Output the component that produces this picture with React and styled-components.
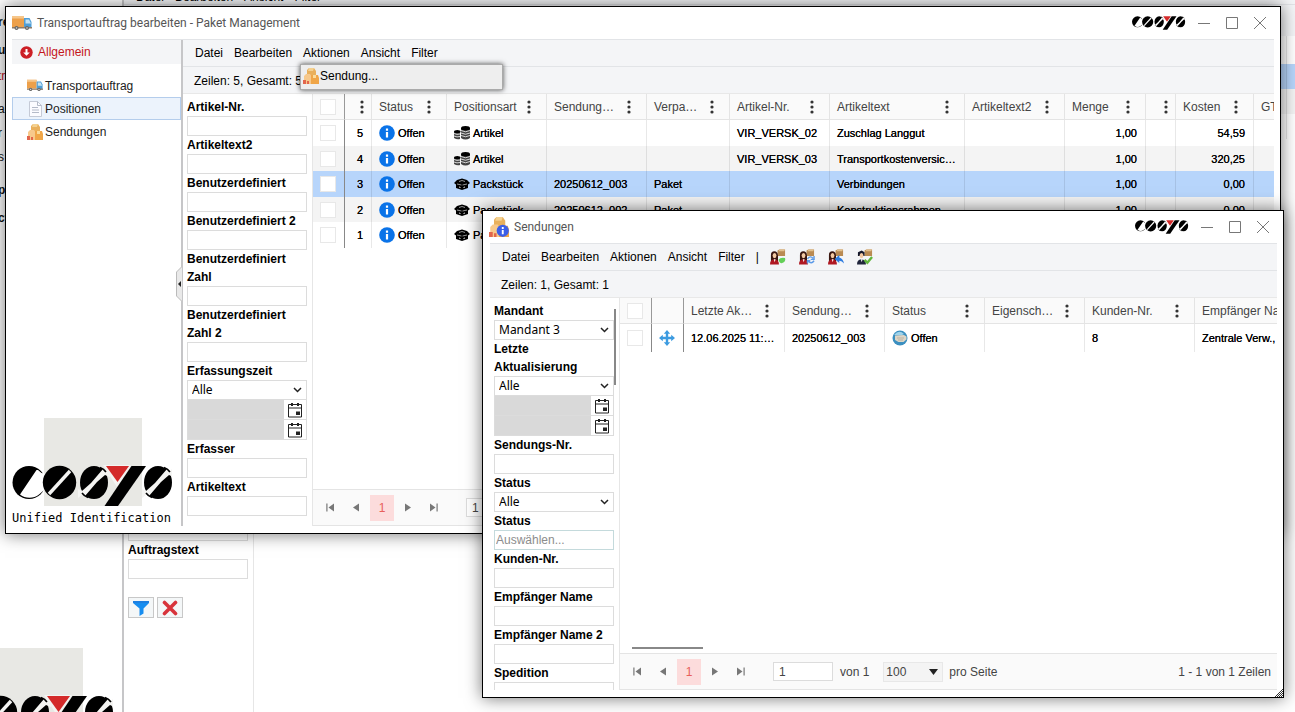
import React, { useId } from 'react';
import styled, { createGlobalStyle } from 'styled-components';

const GlobalStyle = createGlobalStyle`
  * {
    box-sizing: border-box;
  }
  body {
    margin: 0;
    background: #fff;
    color: #000;
    font: 12px/14px "Liberation Sans", Arial, sans-serif;
  }
  button, input, select {
    margin: 0;
    border-radius: 0;
    color: inherit;
    font: inherit;
  }
  svg {
    display: block;
  }
`;

// Desktop and windows
const Desktop = styled.div`
  position: relative;
  height: 100vh;
  overflow: hidden;
`;

const Window = styled.section`
  position: absolute;
  display: flex;
  flex-direction: column;
  background: #fff;
  border: 1px solid #000;
  box-shadow: 0 0 16px rgba(0, 0, 0, 0.55);
`;

const OrderWindow = styled(Window)`
  top: 6px;
  left: 5px;
  right: 14px;
  height: 528px;
`;

const ShipmentWindow = styled(Window)`
  top: 210px;
  left: 482px;
  right: 11px;
  bottom: 14px;
`;

const TitleBar = styled.header`
  display: flex;
  align-items: center;
  height: 32px;
  padding: 0 6px;
`;

const Title = styled.h1`
  flex: 1;
  margin: 0 0 0 5px;
  color: #555;
  font: 12px/16px Roboto, "Open Sans", sans-serif;
`;

const TitleButtons = styled.div`
  display: flex;
  margin-left: 4px;
`;

const TitleButton = styled.button`
  display: grid;
  place-items: center;
  width: 28px;
  height: 28px;
  padding: 0;
  border: 0;
  background: none;
`;

const WindowBody = styled.div`
  display: flex;
  flex: 1;
  min-height: 0;
  margin: 0 6px 7px;
  border-top: 1px solid #e2e4e7;
`;

const ShipmentBody = styled(WindowBody)`
  margin-left: 7px;
`;

const Main = styled.div`
  display: flex;
  flex: 1;
  flex-direction: column;
  min-width: 0;
`;

const ResizeGrip = styled.svg`
  position: absolute;
  right: 0;
  bottom: 0;
`;

// Menus
const MenuBar = styled.nav`
  display: flex;
  align-items: center;
  gap: 11px;
  height: 27px;
  padding-left: 12px;
  background: #f4f5f7;
  border-bottom: 1px solid #e2e4e7;
`;

const MenuButton = styled.button`
  padding: 0;
  border: 0;
  background: none;
`;

const ToolGroup = styled.div`
  display: flex;
  gap: 13px;
`;

const ToolButton = styled(MenuButton)`
  display: block;
  height: 16px;
`;

const MenuPopup = styled.div`
  position: absolute;
  top: 57px;
  left: 294px;
  width: 203px;
  height: 26px;
  background: #eee;
  border: 1px solid #aaa;
  box-shadow: 0 0 5px rgba(0, 0, 0, 0.7);
`;

const PopupItem = styled.button`
  display: flex;
  align-items: center;
  gap: 1px;
  width: 100%;
  height: 22px;
  padding: 0 2px;
  border: 0;
  background: none;
`;

const RowSummary = styled.div`
  height: 27px;
  padding: 7px 11px 0;
  background: #f4f5f7;
  border-bottom: 1px solid #e8e8e8;
`;

// Sidebar
const Sidebar = styled.aside`
  position: relative;
  display: flex;
  flex: none;
  flex-direction: column;
  width: 171px;
  border-right: 2px solid #c6c6c8;
`;

const SidebarHead = styled.div`
  display: flex;
  align-items: center;
  gap: 5px;
  height: 24px;
  margin-bottom: 10px;
  padding-left: 8px;
  background: #f4f5f7;
  color: #c4161c;
`;

const SidebarItem = styled.a`
  display: flex;
  align-items: center;
  gap: 2px;
  height: 23px;
  padding-left: 14px;
  border: 1px solid ${(props) => (props.$active ? '#b4cdec' : 'transparent')};
  background: ${(props) => (props.$active ? '#ecf3fc' : 'none')};
  color: #222;
  text-decoration: none;
`;

const CollapseButton = styled.button`
  position: absolute;
  top: 226px;
  right: -1px;
  height: 36px;
  padding: 0;
  border: 0;
  background: none;
`;

const Brand = styled.div`
  margin-top: auto;
  white-space: nowrap;
`;

const BrandText = styled.div`
  margin-top: 4px;
  font: 12px/16px "DejaVu Sans Mono", monospace;
`;

// Filter form
const Content = styled.div`
  display: flex;
  flex: 1;
  min-height: 0;
`;

const Filters = styled.form`
  position: relative;
  flex: none;
  width: 130px;
  padding: 4px 5px 0 4px;
  overflow: hidden;
  border-right: 1px solid #e6e6e6;
`;

const ScrollThumb = styled.div`
  position: absolute;
  top: 11px;
  right: 3px;
  width: 2px;
  height: 76px;
  background: #888;
`;

const FieldLabel = styled.label`
  display: block;
  font-weight: bold;
  line-height: 18px;
`;

const TextInput = styled.input`
  display: block;
  width: 120px;
  height: 20px;
  padding: 0 1px;
  border: 1px solid ${(props) => (props.$tinted ? '#c4dadc' : '#dcdcdc')};
  background: #fff;
  outline: 0;

  &::placeholder {
    color: #8c8c8c;
  }
`;

const SelectBox = styled.div`
  display: grid;
  align-items: center;
  width: 120px;

  > * {
    grid-area: 1 / 1;
  }
  > svg {
    justify-self: end;
    margin-right: 5px;
    pointer-events: none;
  }
`;

const Select = styled.select`
  width: 100%;
  height: 20px;
  padding: 0 4px;
  border: 1px solid #dcdcdc;
  background: #fff;
  appearance: none;
  font: 12px/18px "Noto Sans", sans-serif;
`;

const DateRow = styled.div`
  display: flex;
  width: 120px;
  height: 20px;
  border: 1px solid #dcdcdc;
  border-top: 0;
`;

const DateInput = styled.input`
  width: 96px;
  padding: 0 2px;
  border: 0;
  background: #d9d9d9;
`;

const DateButton = styled.button`
  display: grid;
  flex: 1;
  place-items: center;
  padding: 0;
  border: 0;
  background: #fff;
`;

// Data grid
const GridArea = styled.div`
  display: flex;
  flex: 1;
  flex-direction: column;
  min-width: 0;
`;

const GridScroll = styled.div`
  flex: 1;
  overflow: hidden;
`;

const Table = styled.table`
  width: ${(props) => props.$width}px;
  table-layout: fixed;
  border-spacing: 0;
`;

const HeadCell = styled.th`
  height: 26px;
  padding: 0 ${(props) => (props.$narrow ? 7 : 15)}px 0 7px;
  background: #fafafa;
  border-right: 1px solid ${(props) => (props.$strong ? '#999' : '#e4e4e4')};
  border-bottom: 1px solid #e4e4e4;
  color: #444;
  font-weight: normal;
  text-align: left;
`;

const HeadContent = styled.div`
  display: flex;
  align-items: center;
  justify-content: space-between;
  white-space: nowrap;
`;

const Row = styled.tr`
  height: ${(props) => props.$height}px;
  background: ${(props) => (props.$selected ? '#b7d5fb' : props.$alt ? '#f4f4f4' : '#fff')};
`;

const Cell = styled.td`
  padding: 0 8px 0 7px;
  overflow: hidden;
  border-right: 1px solid ${(props) => (props.$strong ? '#888' : 'rgba(0, 0, 0, 0.09)')};
  font-size: 11px;
  text-align: ${(props) => (props.$right ? 'right' : 'left')};
  text-overflow: ellipsis;
  text-shadow: 0 0 0 #000;
  white-space: nowrap;
`;

const IconText = styled.span`
  display: flex;
  align-items: center;
  gap: 3px;
`;

const Check = styled.input`
  display: block;
  width: 16px;
  height: 16px;
  appearance: none;
  border: 1px solid #e8e8e8;
  background: #fff;
`;

const HorizontalThumb = styled.div`
  width: 71px;
  height: 2px;
  margin: 0 0 4px 12px;
  background: #888;
`;

// Pager
const PagerBar = styled.div`
  display: flex;
  align-items: center;
  gap: 2px;
  height: 37px;
  padding: 0 6px 0 5px;
  overflow: hidden;
  background: #fafafa;
  border-top: 1px solid #e4e4e4;
  border-bottom: 1px solid #e4e4e4;
  color: #444;
  white-space: nowrap;
`;

const PageButton = styled.button`
  display: grid;
  flex: none;
  place-items: center;
  width: 24px;
  height: 26px;
  padding: 0;
  border: 0;
  background: ${(props) => (props.$current ? '#fcdcdc' : 'none')};
  color: ${(props) => (props.$current ? '#e8605c' : '#777')};
`;

const PageInput = styled.input`
  flex: none;
  width: 60px;
  height: 19px;
  margin: 0 5px 0 18px;
  padding: 0 5px;
  border: 1px solid #dcdcdc;
  background: #fff;
`;

const PageSize = styled(SelectBox)`
  width: 60px;
  margin: 0 4px 0 12px;
`;

const PageSizeSelect = styled(Select)`
  padding: 0 2px;
  background: #f4f4f4;
  border-color: #e8e8e8;
  font: inherit;
`;

const PagerTotal = styled.span`
  margin-left: auto;
`;

// Window at the back, mostly covered
const BackWindow = styled.div`
  display: flex;
  height: 100%;
`;

const BackSidebar = styled.aside`
  display: flex;
  flex: none;
  flex-direction: column;
  width: 124px;
  border-right: 2px solid #c6c6c8;
`;

const BackItem = styled.div`
  height: 24px;
  margin-top: ${(props) => props.$gap}px;
  color: ${(props) => (props.$red ? '#c4161c' : '#111')};
  font-weight: ${(props) => (props.$bold ? 'bold' : 'normal')};
  line-height: 24px;
  text-indent: -2px;
`;

const BackBrand = styled(Brand)`
  margin: auto 0 -44px -47px;
`;

const BackMain = styled(Main)`
  border-top: 9px solid #f4f5f7;
`;

const BackMenu = styled.div`
  display: flex;
  gap: 11px;
  margin-top: -19px;
  padding-left: 12px;
`;

const BackSummary = styled.div`
  height: 32px;
  background: #f4f5f7;
  border-top: 1px solid #e2e4e7;
`;

const BackFilters = styled(Filters)`
  padding-top: 485px;
`;

const ButtonRow = styled.div`
  display: flex;
  gap: 3px;
  margin-top: 18px;
`;

const FilterButton = styled.button`
  display: grid;
  place-items: center;
  width: 26px;
  height: 21px;
  padding: 0;
  border: 1px solid #c8c8c8;
  background: #f4f7f8;
`;

const BackRow = styled.div`
  height: ${(props) => props.$height}px;
  padding-right: 8px;
  background: ${(props) => props.$color};
`;

const BackCell = styled.div`
  height: 100%;
  border-right: 1px solid rgba(0, 0, 0, 0.1);
`;

// Icons
const CosysMark = ({ width, square }) => {
  const gap = square ? '#f4f4f2' : '#fff';
  return (
    <svg width={width} height={square ? 88 : 14} viewBox={square ? '0 0 160 88' : '0 47 160 42'}>
      {square && <rect x="32" width="98" height="88" fill="#e8e8e4" />}
      <circle cx="17" cy="64.5" r="16.5" />
      <path d="M24.500 52 L8 76.500 A15.2 15.2 0 0 0 27 76.500 L31 73 L36 70 V56 L29.500 55 L26 52 Z" fill="#fff" />
      <circle cx="47.5" cy="64.5" r="16.7" />
      <path d="M58 53 L37 76" stroke={gap} strokeWidth="3.4" />
      {[82, 146].map((x) => (
        <g key={x}>
          <ellipse cx={x} cy="64.5" rx="14" ry="16.5" />
          <path
            d={`M${x + 9} 51 L${x - 3} 65 L${x - 12} 73 L${x - 16} 71 L${x - 16} 80 L${x - 11} 76 L${x - 9} 78 L${x + 3} 64 L${x + 11} 57 L${x + 16} 59 L${x + 16} 49 L${x + 11} 54 Z`}
            fill={gap}
          />
          <path
            d={`M${x + 6} 49.500 Q${x + 10} 51 ${x + 12} 54 M${x - 6} 79.500 Q${x - 10} 78 ${x - 12} 75`}
            fill="none"
            stroke="#000"
            strokeWidth="1.500"
          />
        </g>
      ))}
      <path d="M91 47 H119 L105 69 Z" fill={gap} />
      <path d="M94 48 H117 L105.5 64 Z" fill="#d42a2a" />
      <path d="M119.5 48 H134 L106 88 H92.500 Z" />
    </svg>
  );
};

const TruckIcon = ({ width = 20 }) => (
  <svg width={width} height={width * 0.8} viewBox="0 0 20 16">
    <path d="M0 1 h12 v11 h-12 Z" fill="#eda04a" />
    <path d="M0 1 h12 v2.500 h-12 Z" fill="#f6c68a" />
    <path d="M12 3 h5.500 l2 4 v6 h-7.500 Z" fill="#4f9ed6" />
    <path d="M13.500 4.500 h3.500 l2 4 h-5.500 Z" fill="#c3e2f4" />
    <path d="M0 12 h20 v1.500 h-20 Z" fill="#8f7b67" />
    <circle cx="4.500" cy="13" r="2" fill="#666" />
    <circle cx="15" cy="13" r="2" fill="#666" />
    <circle cx="4.500" cy="13" r=".8" fill="#ddd" />
    <circle cx="15" cy="13" r=".8" fill="#ddd" />
  </svg>
);

const ParcelsIcon = ({ size = 16, info }) => (
  <svg width={size} height={size} viewBox="0 0 16 16">
    <path d="M4 2 l2 -2 h5 l2 3 v5 h-9 Z" fill="#e9b05c" />
    <path d="M6 0 h5 l-1 3 h-5 Z" fill="#f4d190" />
    <path d="M1 8 l2 -2 h4 l2 3 v7 h-8 Z" fill="#f7c98c" />
    <path d="M8 7 h7 l1 3 v6 h-8 Z" fill="#f0a648" />
    <path d="M10 7 h3 v3 h-3 Z" fill="#fbdc9b" />
    <path d="M0 12 h3 v4 h-3 Z M4 13 h2 v3 h-2 Z" fill="#e2664c" />
    {info && (
      <>
        <circle cx="11" cy="11" r="4.900" fill="#3c5fe8" />
        <path d="M11 8 v1.500 M11 10.300 v3.500" stroke="#fff" strokeWidth="1.500" />
      </>
    )}
  </svg>
);

const DocumentIcon = () => (
  <svg width="16" height="16" viewBox="0 0 16 16">
    <path d="M2.500 .5 h8 l4 4 v11 h-12 Z" fill="#fbfbff" stroke="#c5cad6" />
    <path d="M10.500 .5 v4 h4 M5 6.500 h6 M5 9 h7 M5 11.500 h7" fill="none" stroke="#b4bac8" />
  </svg>
);

const ExpandIcon = () => (
  <svg width="13" height="13" viewBox="0 0 13 13">
    <circle cx="6.500" cy="6.500" r="6.200" fill="#cc1f25" />
    <path d="M5.500 3 h2 v3.500 h2.300 l-3.300 3.300 l-3.300 -3.300 h2.300 Z" fill="#fff" />
  </svg>
);

const InfoIcon = () => (
  <svg width="16" height="16" viewBox="0 0 16 16">
    <circle cx="8" cy="8" r="7.800" fill="#0a73e8" />
    <path d="M8 3.500 v2.200 M8 7 v5.500" stroke="#fff" strokeWidth="2.200" />
  </svg>
);

const CoinsIcon = () => (
  <svg width="16" height="14" viewBox="0 0 16 14">
    <path d="M7 2 V12 q4.500 3 9 0 V2 Z M0 6 V12 q3 2 6 1 V6 Z" fill="#444" />
    <ellipse cx="11.500" cy="2.200" rx="4.500" ry="2.200" />
    <ellipse cx="3.300" cy="5.500" rx="3.300" ry="1.600" />
    <path
      d="M7 4.500 q4.500 2.500 9 0 M7 7 q4.500 2.500 9 0 M7 9.500 q4.500 2.500 9 0 M0 7.500 q3 1.500 6 .5 M0 10 q3 1.500 6 .5"
      fill="none"
      stroke="#e6e6e6"
      strokeWidth=".9"
    />
  </svg>
);

const BoxIcon = () => (
  <svg width="16" height="12" viewBox="0 0 16 12">
    <path d="M3 2 l5 -1.500 l5 1.500 l3 3 l-2 1.500 v3.500 l-6 2 l-6 -2 v-3.500 l-2 -1.500 Z" />
    <path d="M5 3.500 l3 -1 l3 1 M3 6 l4.500 1 M13 6 l-4.500 1" fill="none" stroke="#bbb" strokeWidth=".8" />
    <path d="M5 9 l1.500 .5 M9.500 9.500 l1.500 -.5" stroke="#ddd" />
  </svg>
);

const PersonIcon = ({ kind }) => (
  <svg width="16" height="16" viewBox="0 0 17 16">
    <path d="M8 1 l2 -1 h6 v7 h-8 Z" fill="#b98a52" />
    <path d="M10 0 h6 l-1 2 h-6 Z" fill="#e2c08c" />
    <path
      d={kind === 'man' ? 'M1 3 l4 -2 l3 2 v4 h-7 Z' : 'M1 14 V6 q0 -4 3.500 -4 q4 0 4 5 v7 Z'}
      fill={kind === 'man' ? '#15182b' : '#3a1710'}
    />
    <ellipse cx="4.800" cy="6.500" rx="2" ry="2.800" fill="#f3c9a3" />
    <path d="M0 16 q0 -5 4.500 -5.500 q5 .5 5 5.500 Z" fill={kind === 'man' ? '#20253c' : '#b01822'} />
    <path d="M4 10.500 l1 3 l1 -3 Z" fill="#fff" />
    {kind === 'add' && <path d="M9 11 q2 -3 7 -2 q1 4 -3 5.500 q-3 .5 -4 -3.500 Z" fill="#63cf58" />}
    {kind === 'sync' && (
      <path d="M9 10 q3 -4 6 -.5 M16 7 v3.500 h-3.500 M16 12 q-3 4 -6 .5 M9 15 v-3 h3" fill="none" stroke="#5b9ae8" strokeWidth="1.500" />
    )}
    {kind === 'back' && <path d="M7 10 l5 -4 v2.500 q4 1 5 6.500 q-2 -3 -5 -3 v2.500 Z" fill="#2d7be0" />}
    {kind === 'man' && <path d="M8 11 l3 3 l5 -6" fill="none" stroke="#61b53b" strokeWidth="2.500" />}
  </svg>
);

const MoveIcon = () => (
  <svg width="16" height="16" viewBox="0 0 16 16">
    <path
      d="M8 0 l3.200 3.800 h-2 v3 h3 v-2 l3.800 3.200 l-3.800 3.200 v-2 h-3 v3 h2 l-3.200 3.800 l-3.200 -3.800 h2 v-3 h-3 v2 l-3.800 -3.200 l3.800 -3.200 v2 h3 v-3 h-2 Z"
      fill="#3c9be0"
    />
  </svg>
);

const GlobeIcon = () => (
  <svg width="16" height="16" viewBox="0 0 16 16">
    <circle cx="8" cy="8" r="7.500" fill="#3b8fc0" />
    <path d="M2 5 q5 -6 10 -1 l-2 1 Z" fill="#9fd3ea" />
    <path d="M3 5.500 l9 -.5 l2.500 1.500 v3 l-3 2.500 h-5 l-3.500 -2 Z" fill="#dcd5c6" />
    <path d="M5 8 h7 M6 10 h5" fill="none" stroke="#b3aa99" strokeWidth=".8" />
  </svg>
);

const DotsIcon = () => (
  <svg width="4" height="14" viewBox="0 0 4 14" fill="#333">
    <circle cx="2" cy="2" r="1.600" />
    <circle cx="2" cy="7" r="1.600" />
    <circle cx="2" cy="12" r="1.600" />
  </svg>
);

const ChevronIcon = () => (
  <svg width="9" height="6" viewBox="0 0 9 6">
    <path d="M1 1 l3.500 3.500 L8 1" fill="none" stroke="#222" strokeWidth="1.500" />
  </svg>
);

const CalendarIcon = () => (
  <svg width="14" height="16" viewBox="0 0 14 16">
    <path d="M.5 2.500 h13 v12.500 h-13 Z M.5 6 h13" fill="none" stroke="#222" />
    <path d="M3 1 h2 v3 h-2 Z M9 1 h2 v3 h-2 Z M8 9.500 h4 v3.500 h-4 Z" fill="#222" />
  </svg>
);

const ArrowIcon = ({ flip, end }) => (
  <svg width="8" height="9" viewBox="0 0 8 9" fill="currentColor">
    <g transform={flip ? 'translate(8 0) scale(-1 1)' : undefined}>
      <path d={end ? 'M0 .5 L5.500 4.500 L0 8.500 Z M6.500 .5 h1.200 v8 h-1.200 Z' : 'M1 .5 L7 4.500 L1 8.500 Z'} />
    </g>
  </svg>
);

const menuItems = ['Datei', 'Bearbeiten', 'Aktionen', 'Ansicht', 'Filter'];

const WindowTitle = ({ icon, children }) => (
  <TitleBar>
    {icon}
    <Title>{children}</Title>
    <CosysMark width={55} />
    <TitleButtons>
      <TitleButton aria-label="Minimieren">
        <svg width="12" height="12" viewBox="0 0 12 12">
          <path d="M0 6.500 h12" stroke="#777" />
        </svg>
      </TitleButton>
      <TitleButton aria-label="Maximieren">
        <svg width="12" height="12" viewBox="0 0 12 12">
          <path d="M.5 .5 h11 v11 h-11 Z" fill="none" stroke="#777" />
        </svg>
      </TitleButton>
      <TitleButton aria-label="Schließen">
        <svg width="12" height="12" viewBox="0 0 12 12">
          <path d="M0 0 L12 12 M12 0 L0 12" stroke="#777" />
        </svg>
      </TitleButton>
    </TitleButtons>
  </TitleBar>
);

const Field = ({ label, type, value = 'Alle', placeholder }) => {
  const id = useId();
  const isSelect = type === 'select' || type === 'period';

  return (
    <div>
      <FieldLabel htmlFor={id}>{label}</FieldLabel>
      {isSelect ? (
        <SelectBox>
          <Select id={id}>
            <option>{value}</option>
          </Select>
          <ChevronIcon />
        </SelectBox>
      ) : (
        <TextInput id={id} placeholder={placeholder} $tinted={Boolean(placeholder)} />
      )}
      {type === 'period' &&
        ['von', 'bis'].map((edge) => (
          <DateRow key={edge}>
            <DateInput disabled aria-label={`${label} ${edge}`} />
            <DateButton type="button" aria-label={`${label} ${edge} wählen`}>
              <CalendarIcon />
            </DateButton>
          </DateRow>
        ))}
    </div>
  );
};

const Pager = ({ total }) => (
  <PagerBar>
    <PageButton aria-label="Erste Seite">
      <ArrowIcon flip end />
    </PageButton>
    <PageButton aria-label="Vorherige Seite">
      <ArrowIcon flip />
    </PageButton>
    <PageButton $current>1</PageButton>
    <PageButton aria-label="Nächste Seite">
      <ArrowIcon />
    </PageButton>
    <PageButton aria-label="Letzte Seite">
      <ArrowIcon end />
    </PageButton>
    <PageInput aria-label="Seite" defaultValue="1" />
    <span>von 1</span>
    <PageSize>
      <PageSizeSelect aria-label="Zeilen pro Seite">
        <option>100</option>
      </PageSizeSelect>
      <svg width="9" height="6" viewBox="0 0 9 6">
        <path d="M0 0 h9 L4.500 6 Z" fill="#222" />
      </svg>
    </PageSize>
    <span>pro Seite</span>
    <PagerTotal>{total}</PagerTotal>
  </PagerBar>
);

const Grid = ({ columns, rows, rowHeight }) => (
  <Table $width={columns.reduce((sum, column) => sum + column.width, 0)}>
    <colgroup>
      {columns.map((column, index) => (
        <col key={index} style={{ width: column.width }} />
      ))}
    </colgroup>
    <thead>
      <tr>
        {columns.map((column, index) => (
          <HeadCell key={index} $narrow={column.narrow} $strong={column.strong}>
            {column.check ? (
              <Check type="checkbox" aria-label="Alle auswählen" />
            ) : (
              <HeadContent>
                <span>{column.title}</span>
                {!column.plain && <DotsIcon />}
              </HeadContent>
            )}
          </HeadCell>
        ))}
      </tr>
    </thead>
    <tbody>
      {rows.map((row, index) => (
        <Row key={index} $height={rowHeight - (index % 2)} $alt={index % 2 === 1} $selected={row.selected}>
          {columns.map((column, cell) => (
            <Cell key={cell} $right={column.right} $strong={column.strong}>
              {column.check ? <Check type="checkbox" aria-label="Zeile auswählen" /> : row.cells[cell - 1]}
            </Cell>
          ))}
        </Row>
      ))}
    </tbody>
  </Table>
);

const withIcon = (icon, text) => (
  <IconText>
    {icon}
    {text}
  </IconText>
);

const positionColumns = [
  { width: 32, check: true, strong: true },
  { width: 27, narrow: true, right: true },
  { width: 75, title: 'Status' },
  { width: 100, title: 'Positionsart' },
  { width: 100, title: 'Sendung…' },
  { width: 83, title: 'Verpa…' },
  { width: 100, title: 'Artikel-Nr.' },
  { width: 135, title: 'Artikeltext' },
  { width: 100, title: 'Artikeltext2' },
  { width: 81, title: 'Menge', right: true },
  { width: 30, narrow: true },
  { width: 78, title: 'Kosten', right: true },
  { width: 100, title: 'GT', plain: true },
];

const open = withIcon(<InfoIcon />, 'Offen');
const article = withIcon(<CoinsIcon />, 'Artikel');
const parcel = withIcon(<BoxIcon />, 'Packstück');

const positions = [
  { cells: ['5', open, article, '', '', 'VIR_VERSK_02', 'Zuschlag Langgut', '', '1,00', '', '54,59'] },
  { cells: ['4', open, article, '', '', 'VIR_VERSK_03', 'Transportkostenversicherung', '', '1,00', '', '320,25'] },
  { cells: ['3', open, parcel, '20250612_003', 'Paket', '', 'Verbindungen', '', '1,00', '', '0,00'], selected: true },
  { cells: ['2', open, parcel, '20250612_002', 'Paket', '', 'Konstruktionsrahmen', '', '1,00', '', '0,00'] },
  { cells: ['1', open, parcel] },
];

const shipmentColumns = [
  { width: 32, check: true, strong: true },
  { width: 32, plain: true, strong: true },
  { width: 101, title: 'Letzte Ak…' },
  { width: 100, title: 'Sendung…' },
  { width: 100, title: 'Status' },
  { width: 100, title: 'Eigensch…' },
  { width: 110, title: 'Kunden-Nr.' },
  { width: 150, title: 'Empfänger Name' },
];

const shipments = [
  { cells: [<MoveIcon />, '12.06.2025 11:30:00', '20250612_003', withIcon(<GlobeIcon />, 'Offen'), '', '8', 'Zentrale Verw., Lager'] },
];

const backItems = [
  { text: 're', gap: 10, bold: true },
  { text: 'u', gap: 4, bold: true },
  { text: 'tr', gap: 2, red: true },
  { text: 'ar', gap: 9 },
  { text: 'r', gap: 0 },
  { text: 's', gap: 0 },
  { text: 'pe', gap: 9, bold: true },
  { text: 'ct', gap: 4, bold: true },
];

const Background = () => (
  <BackWindow>
    <BackSidebar>
      {backItems.map((item) => (
        <BackItem key={item.text} $gap={item.gap} $bold={item.bold} $red={item.red}>
          {item.text}
        </BackItem>
      ))}
      <BackBrand>
        <CosysMark width={160} square />
        <BrandText>Unified Identification</BrandText>
      </BackBrand>
    </BackSidebar>
    <BackMain>
      <BackMenu>
        {['Datei', 'Bearbeiten', 'Ansicht', 'Filter'].map((item) => (
          <span key={item}>{item}</span>
        ))}
      </BackMenu>
      <BackSummary />
      <Content>
        <BackFilters>
          <TextInput aria-label="Filter" />
          <Field label="Auftragstext" />
          <ButtonRow>
            <FilterButton type="button" aria-label="Filtern">
              <svg width="16" height="16" viewBox="0 0 16 16">
                <path d="M0 1 h16 v2 l-5.500 5.500 v5 l-4 2.500 v-7.500 l-6.500 -5.500 Z" fill="#168df0" />
                <path d="M0 1 h16 v2 h-16 Z" fill="#1d7fe0" />
              </svg>
            </FilterButton>
            <FilterButton type="button" aria-label="Filter löschen">
              <svg width="16" height="16" viewBox="0 0 16 16">
                <path d="M2.500 2.500 L13.500 13.500 M13.500 2.500 L2.500 13.500" stroke="#d8343c" strokeWidth="3.600" strokeLinecap="round" />
              </svg>
            </FilterButton>
          </ButtonRow>
        </BackFilters>
        <GridArea>
          <BackRow $height={28} $color="#fff">
            <BackCell />
          </BackRow>
          <BackRow $height={25} $color="#b7d5fb">
            <BackCell />
          </BackRow>
          <BackRow $height={25} $color="#f4f4f4">
            <BackCell />
          </BackRow>
          <BackRow $height={25} $color="#fff">
            <BackCell />
          </BackRow>
        </GridArea>
      </Content>
    </BackMain>
  </BackWindow>
);

const Positions = () => (
  <OrderWindow>
    <WindowTitle icon={<TruckIcon />}>Transportauftrag bearbeiten - Paket Management</WindowTitle>
    <WindowBody>
      <Sidebar>
        <SidebarHead>
          <ExpandIcon />
          Allgemein
        </SidebarHead>
        <SidebarItem href="#transportauftrag">
          <TruckIcon width={16} />
          Transportauftrag
        </SidebarItem>
        <SidebarItem href="#positionen" $active>
          <DocumentIcon />
          Positionen
        </SidebarItem>
        <SidebarItem href="#sendungen">
          <ParcelsIcon />
          Sendungen
        </SidebarItem>
        <Brand>
          <CosysMark width={160} square />
          <BrandText>Unified Identification</BrandText>
        </Brand>
        <CollapseButton aria-label="Seitenleiste einklappen">
          <svg width="6" height="36" viewBox="0 0 6 36">
            <path d="M6 .5 L.5 6 V30 L6 35.500" fill="#e9e9e9" stroke="#bbb" />
            <path d="M5 15 v6 l-3 -3 Z" fill="#222" />
          </svg>
        </CollapseButton>
      </Sidebar>
      <Main>
        <MenuBar>
          {menuItems.map((item) => (
            <MenuButton key={item}>{item}</MenuButton>
          ))}
        </MenuBar>
        <RowSummary>Zeilen: 5, Gesamt: 5</RowSummary>
        <Content>
          <Filters>
            <Field label="Artikel-Nr." />
            <Field label="Artikeltext2" />
            <Field label="Benutzerdefiniert" />
            <Field label="Benutzerdefiniert 2" />
            <Field label="Benutzerdefiniert Zahl" />
            <Field label="Benutzerdefiniert Zahl 2" />
            <Field label="Erfassungszeit" type="period" />
            <Field label="Erfasser" />
            <Field label="Artikeltext" />
          </Filters>
          <GridArea>
            <GridScroll>
              <Grid columns={positionColumns} rows={positions} rowHeight={26} />
            </GridScroll>
            <Pager total="1 - 5 von 5 Zeilen" />
          </GridArea>
        </Content>
      </Main>
    </WindowBody>
    <MenuPopup>
      <PopupItem>
        <ParcelsIcon />
        Sendung...
      </PopupItem>
    </MenuPopup>
  </OrderWindow>
);

const Shipments = () => (
  <ShipmentWindow>
    <WindowTitle icon={<ParcelsIcon size={20} info />}>Sendungen</WindowTitle>
    <ShipmentBody>
      <Main>
        <MenuBar>
          {menuItems.map((item) => (
            <MenuButton key={item}>{item}</MenuButton>
          ))}
          <span>|</span>
          <ToolGroup>
            {['add', 'sync', 'back', 'man'].map((kind) => (
              <ToolButton key={kind} aria-label={kind}>
                <PersonIcon kind={kind} />
              </ToolButton>
            ))}
          </ToolGroup>
        </MenuBar>
        <RowSummary>Zeilen: 1, Gesamt: 1</RowSummary>
        <Content>
          <Filters>
            <Field label="Mandant" type="select" value="Mandant 3" />
            <Field label="Letzte Aktualisierung" type="period" />
            <Field label="Sendungs-Nr." />
            <Field label="Status" type="select" />
            <Field label="Status" placeholder="Auswählen..." />
            <Field label="Kunden-Nr." />
            <Field label="Empfänger Name" />
            <Field label="Empfänger Name 2" />
            <Field label="Spedition" />
            <ScrollThumb />
          </Filters>
          <GridArea>
            <GridScroll>
              <Grid columns={shipmentColumns} rows={shipments} rowHeight={28} />
            </GridScroll>
            <HorizontalThumb />
            <Pager total="1 - 1 von 1 Zeilen" />
          </GridArea>
        </Content>
      </Main>
    </ShipmentBody>
    <ResizeGrip width="8" height="8" viewBox="0 0 8 8">
      <path d="M0 8 L8 0 M2 8 L8 2 M4 8 L8 4 M6 8 L8 6" stroke="#333" />
    </ResizeGrip>
  </ShipmentWindow>
);

const App = () => (
  <>
    <GlobalStyle />
    <Desktop>
      <Background />
      <Positions />
      <Shipments />
    </Desktop>
  </>
);

export default App;
